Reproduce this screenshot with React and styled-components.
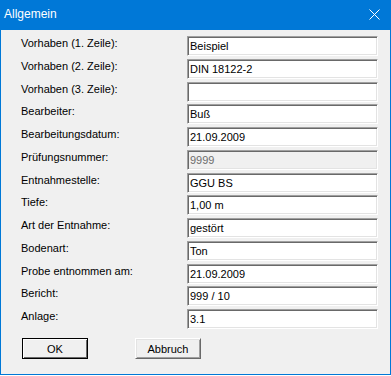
import React from "react";
import styled, { createGlobalStyle } from "styled-components";

const Global = createGlobalStyle`
  html, body { margin: 0; padding: 0; background: #ffffff; }
  body { font-family: "Liberation Sans", Arial, sans-serif; }
`;

const Window = styled.div`
  width: 391px;
  height: 375px;
  box-sizing: border-box;
  border: 1px solid #0078d7;
  border-top: none;
  background: #f0f0f0;
  display: flex;
  flex-direction: column;
`;

const TitleBar = styled.div`
  height: 30px;
  flex: none;
  background: #0078d7;
  color: #ffffff;
  display: flex;
  align-items: center;
  justify-content: space-between;
  padding: 0 11px 0 4px;
  font-size: 12px;
  margin: 0 -1px;
`;

const Title = styled.span`
  padding-bottom: 2px;
`;

const CloseIcon = styled.svg`
  width: 11px;
  height: 11px;
  display: block;
  margin-bottom: 1px;
`;

const Body = styled.div`
  padding: 6px 0 0 20px;
  display: flex;
  flex-direction: column;
`;

const Form = styled.div`
  display: grid;
  grid-template-columns: 166px 191px;
  grid-auto-rows: 20px;
  row-gap: 2.75px;
`;

const Label = styled.label`
  font-size: 11px;
  line-height: 13px;
  padding-top: 1px;
  color: #000;
  white-space: nowrap;
`;

const Field = styled.div`
  box-sizing: border-box;
  height: 20px;
  border: 1px solid;
  border-color: #a0a0a0 #ffffff #ffffff #a0a0a0;
  box-shadow: inset 1px 1px 0 #696969, inset -1px -1px 0 #e3e3e3;
  background: ${(p) => (p.$disabled ? "#f0f0f0" : "#ffffff")};
  color: ${(p) => (p.$disabled ? "#6d6d6d" : "#000000")};
  font-size: 11px;
  line-height: 18px;
  padding: 0 2px;
  white-space: nowrap;
  overflow: hidden;
`;

const Buttons = styled.div`
  display: flex;
  gap: 47px;
  margin-top: 9px;
  padding-left: 1px;
`;

const Button = styled.div`
  box-sizing: border-box;
  width: 66px;
  height: 21px;
  background: #f0f0f0;
  border: 1px solid;
  border-color: ${(p) => (p.$default ? "#000 #000 #000 #000" : "#ffffff #696969 #696969 #ffffff")};
  box-shadow: ${(p) =>
    p.$default
      ? "inset 1px 1px 0 #ffffff, inset -1px -1px 0 #696969"
      : "inset 1px 1px 0 #e3e3e3, inset -1px -1px 0 #a0a0a0"};
  font-size: 11px;
  display: flex;
  align-items: center;
  justify-content: center;
  color: #000;
`;

const rows = [
  ["Vorhaben (1. Zeile):", "Beispiel"],
  ["Vorhaben (2. Zeile):", "DIN 18122-2"],
  ["Vorhaben (3. Zeile):", ""],
  ["Bearbeiter:", "Buß"],
  ["Bearbeitungsdatum:", "21.09.2009"],
  ["Prüfungsnummer:", "9999", true],
  ["Entnahmestelle:", "GGU BS"],
  ["Tiefe:", "1,00 m"],
  ["Art der Entnahme:", "gestört"],
  ["Bodenart:", "Ton"],
  ["Probe entnommen am:", "21.09.2009"],
  ["Bericht:", "999 / 10"],
  ["Anlage:", "3.1"],
];

export default function App() {
  return (
    <>
      <Global />
      <Window>
        <TitleBar>
          <Title>Allgemein</Title>
          <CloseIcon viewBox="0 0 11 11">
            <path d="M0.5 0.5 L10.5 10.5 M10.5 0.5 L0.5 10.5" stroke="#ffffff" strokeWidth="1" fill="none" />
          </CloseIcon>
        </TitleBar>
        <Body>
          <Form>
            {rows.map(([label, value, disabled]) => (
              <React.Fragment key={label}>
                <Label>{label}</Label>
                <Field $disabled={disabled}>{value}</Field>
              </React.Fragment>
            ))}
          </Form>
          <Buttons>
            <Button $default>OK</Button>
            <Button>Abbruch</Button>
          </Buttons>
        </Body>
      </Window>
    </>
  );
}
